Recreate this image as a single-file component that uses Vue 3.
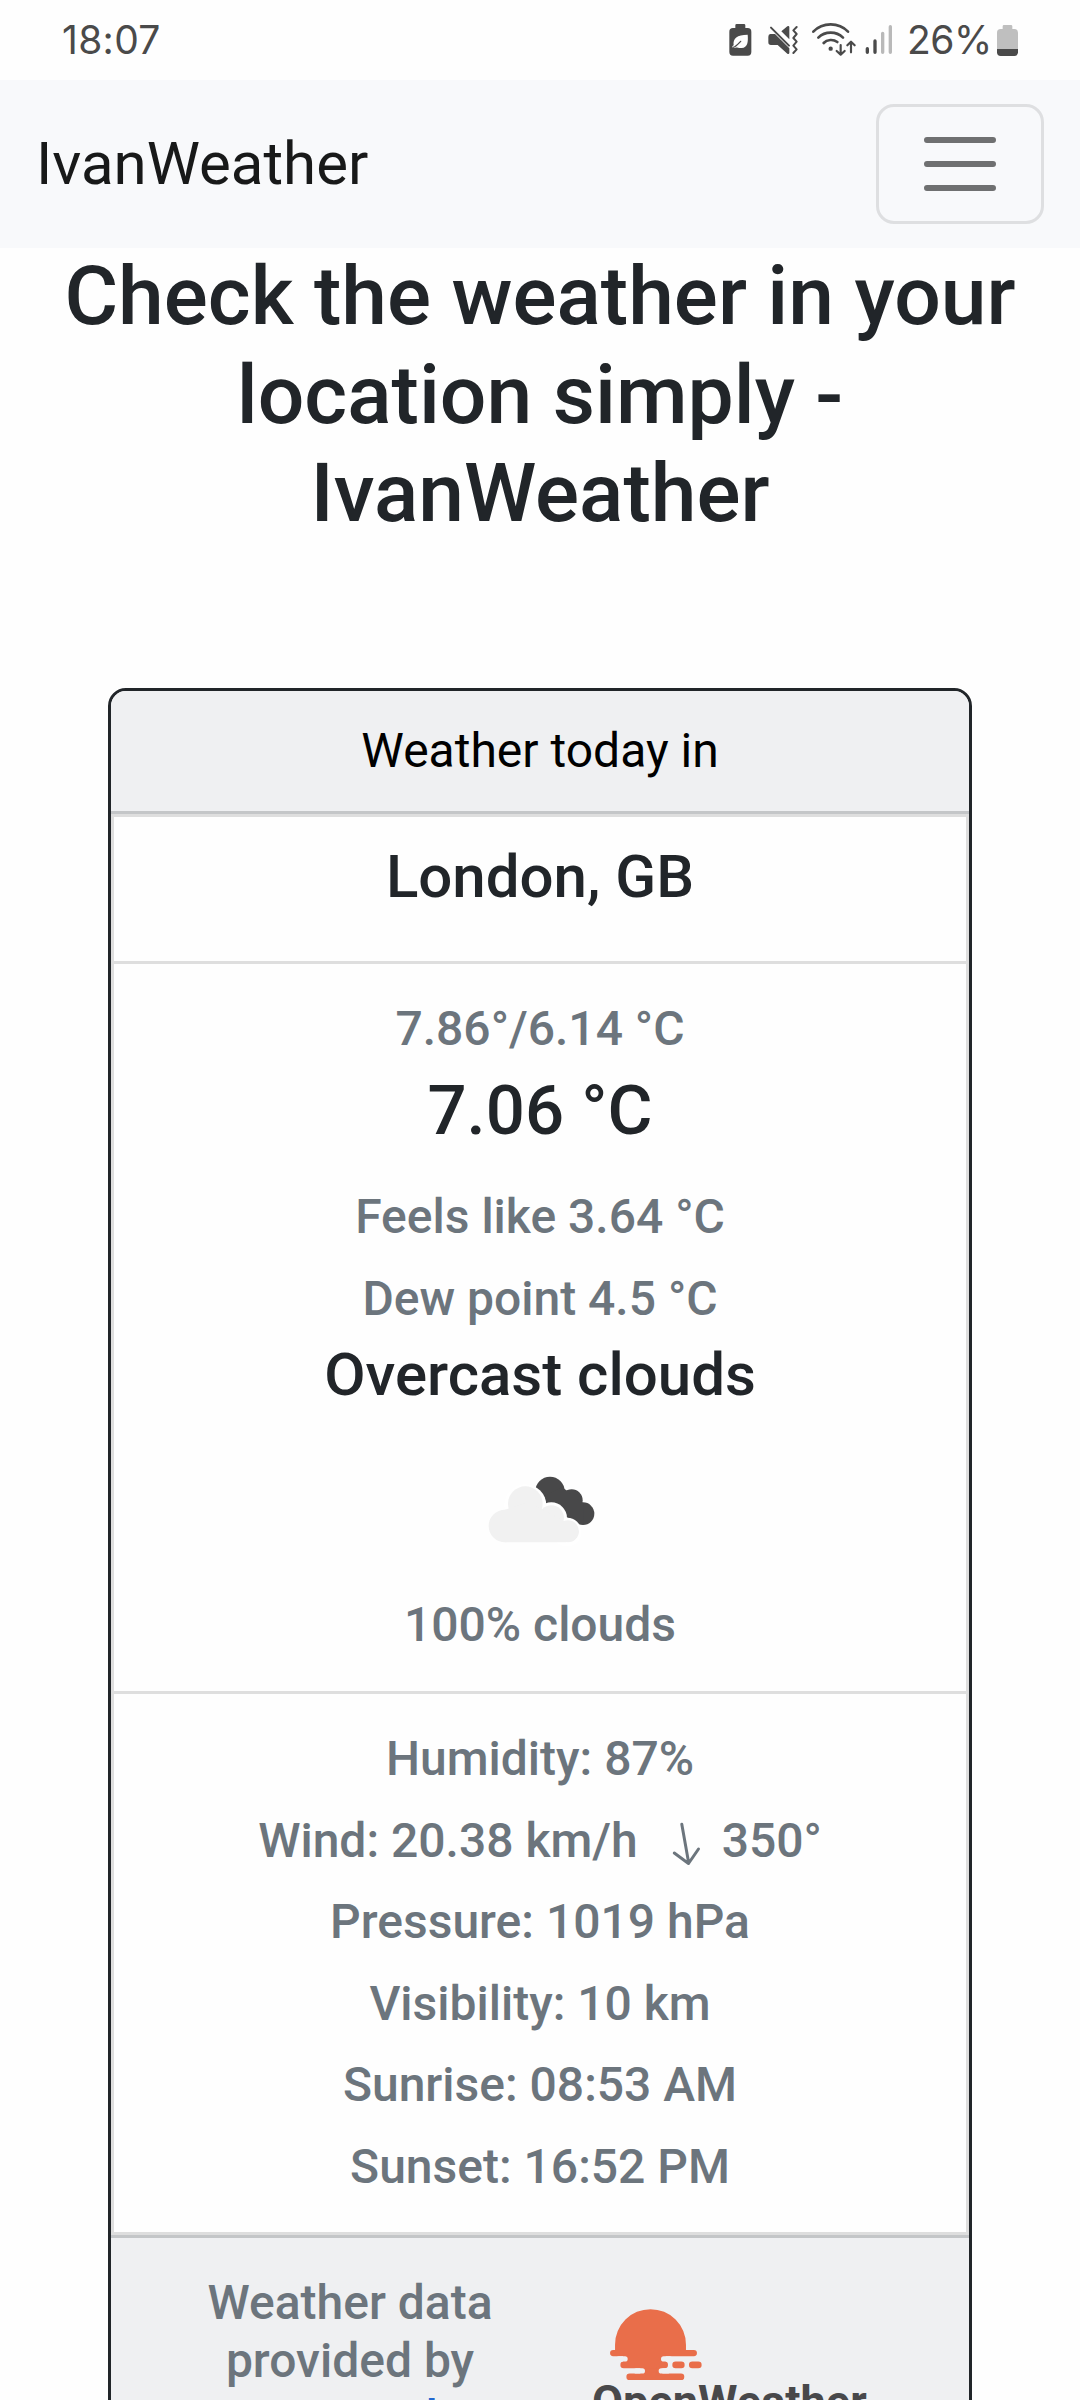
<script setup>
const readings = ['Pressure: 1019 hPa', 'Visibility: 10 km', 'Sunrise: 08:53 AM', 'Sunset: 16:52 PM']
</script>

<template>
  <div class="screen">
    <header class="status">
      <span class="clock">18:07</span>
      <div class="indicators">
        <svg class="glyphs" viewBox="80 60 510 120" fill="none" stroke-linecap="round" stroke-linejoin="round">
          <path fill="#4a4a4a" d="M109 72h22q4 0 4 4v8h7q11 0 11 11v61q0 11-11 11H98q-11 0-11-11V95q0-11 11-11h7v-8q0-4 4-4z" />
          <path fill="#fff" d="M142 104c2 21 0 39-18 40-9 1-13-2-19-1l-8 1c-3-4 0-6 3-8-3-20 10-32 42-32z" />
          <path stroke="#4a4a4a" stroke-width="4" d="M98 142c5 0 10-4 23-18" />
          <path fill="#4a4a4a" d="M210 102h14l43 43v14q-1 5-6 2l-29-26h-20q-8 0-8-8v-17q0-8 6-8zM243 94l18-15q5-3 6 2v37z" />
          <path stroke="#4a4a4a" stroke-width="6" d="M212 83l54 54M289 81l-10 10 10 11-10 12 10 11-10 12 10 11-10 11" />
          <g stroke="#4a4a4a" stroke-width="8">
            <path d="M339 95c28-29 76-29 104 0M354 113c20-20 54-20 74 0M370 129c10-11 29-12 41-3" />
            <path stroke-width="6.500" d="M421 135v28M409 153l12 11 12-11M452 157v-31M441 136l11-11 11 11" />
          </g>
          <circle cx="391" cy="146" r="6.5" fill="#4a4a4a" />
          <path stroke="#4a4a4a" stroke-width="10" d="M501 146v11M524 123v34" />
          <path stroke="#b9b9b9" stroke-width="10" d="M547 100v57M570 80v77" />
        </svg>
        <span class="percent">26%</span>
        <svg class="battery" viewBox="0 0 63 93">
          <path fill="#bfbfbf" d="M21 0h21q4 0 4 4v8h6q11 0 11 11v50H0V23q0-11 11-11h6V4q0-4 4-4z" />
          <path fill="#4a4a4a" d="M0 72h63v10q0 11-11 11H11Q0 93 0 82z" />
        </svg>
      </div>
    </header>

    <nav class="navbar">
      <a class="brand">IvanWeather</a>
      <button class="toggler" type="button" aria-label="Menu">
        <svg viewBox="0 0 30 30" width="90" height="90">
          <path stroke="#6f7071" stroke-width="2" stroke-linecap="round" d="M4 7h22M4 15h22M4 23h22" />
        </svg>
      </button>
    </nav>

    <h1>Check the weather in your location simply - IvanWeather</h1>

    <main class="card">
      <div class="card-header">Weather today in</div>
      <ul class="list">
        <li class="item city"><h5>London, GB</h5></li>
        <li class="item now">
          <h6>7.86°/6.14 °C</h6>
          <h3>7.06 °C</h3>
          <h6>Feels like 3.64 °C</h6>
          <h6 class="dew">Dew point 4.5 °C</h6>
          <h5>Overcast clouds</h5>
          <svg class="cloud" viewBox="495 372 450 450">
            <g fill="#484849">
              <circle cx="750" cy="544" r="44" />
              <circle cx="815" cy="571" r="33" />
              <circle cx="849" cy="611" r="34" />
              <path d="M725 560l60-30 65 50v60l-55-20z" />
            </g>
            <g fill="#fff">
              <circle cx="676" cy="586" r="63" />
              <circle cx="754" cy="624" r="47" />
              <circle cx="801" cy="666" r="43" />
            </g>
            <g fill="#f1f1f1">
              <circle cx="615" cy="648" r="49" />
              <circle cx="676" cy="581" r="52" />
              <circle cx="754" cy="624" r="38" />
              <circle cx="804" cy="664" r="33" />
              <path d="M615 599l61-20 38 12 84 46v60H615z" />
            </g>
          </svg>
          <h6>100% clouds</h6>
        </li>
        <li class="item details">
          <h6>Humidity: 87%</h6>
          <h6 class="wind">
            <span>Wind: 20.38 km/h</span>
            <svg class="arrow" viewBox="0 0 30 46">
              <path d="M10.8 4.3L17.7 43M3.3 33l14.2 10.5L27.5 29" />
            </svg>
            <span>350°</span>
          </h6>
          <h6 v-for="r in readings" :key="r">{{ r }}</h6>
        </li>
      </ul>
      <footer class="card-footer">
        <h6 class="credit">Weather data provided by <a>OpenWeather</a></h6>
        <div class="logo">
          <svg class="sun" viewBox="211 299 276 215">
            <g fill="#e96e4a">
              <path d="M226 425V406a106.500 106.500 0 0 1 213 0v19z" />
              <rect x="211" y="422" width="261" height="19" rx="9.500" />
              <path d="M263 436h102v30H263zM315 470h43v30h-43z" />
              <rect x="242" y="457" width="143" height="20" rx="10" />
              <rect x="398" y="457" width="37" height="20" rx="10" />
              <rect x="448" y="457" width="38" height="20" rx="10" />
              <rect x="260" y="493" width="174" height="20" rx="10" />
              <path d="M250 436h16v25h-16zM362 436h16v25h-16zM302 472h16v25h-16zM352 472h16v25h-16z" />
            </g>
            <g fill="#eff0f2">
              <rect x="230" y="441" width="34" height="16" rx="8" />
              <rect x="364" y="441" width="34" height="16" rx="8" />
              <rect x="282" y="477" width="34" height="16" rx="8" />
              <rect x="357" y="477" width="34" height="16" rx="8" />
            </g>
          </svg>
          <span class="wordmark">OpenWeather</span>
        </div>
      </footer>
    </main>
  </div>
</template>

<style>
body {
  margin: 0;
  background: #fff;
}
</style>

<style scoped>
.screen {
  width: 1080px;
  height: 2400px;
  overflow: hidden;
  background: #fefefe;
  color: #212529;
  font-family: Roboto, sans-serif;
  font-size: 48px;
  line-height: 72px;
}
h1, h3, h5, h6, ul {
  margin: 0;
  padding: 0;
  font-weight: 500;
}
.status {
  display: flex;
  justify-content: space-between;
  align-items: center;
  height: 80px;
  box-sizing: border-box;
  padding: 0 62px 0 62px;
  font-family: Inter, sans-serif;
  font-size: 39px;
  line-height: 80px;
  color: #4a4a4a;
}
.clock {
  letter-spacing: 0.3px;
}
.indicators {
  display: flex;
  align-items: center;
}
.glyphs {
  width: 170px;
  height: 40px;
}
.percent {
  width: 88px;
  margin-left: 10px;
  letter-spacing: -0.5px;
  white-space: nowrap;
}
.battery {
  width: 21px;
  height: 31px;
  margin-left: 2px;
}
.navbar {
  display: flex;
  justify-content: space-between;
  align-items: center;
  height: 168px;
  box-sizing: border-box;
  padding: 0 36px;
  background: #f8f9fb;
}
.brand {
  font-size: 60px;
  line-height: 90px;
  color: #181919;
}
.toggler {
  display: flex;
  align-items: center;
  justify-content: center;
  width: 168px;
  height: 120px;
  padding: 0;
  border: 3px solid #dedfe1;
  border-radius: 18px;
  background: none;
}
h1 {
  margin-top: -1px;
  padding: 0 36px;
  font-size: 82.2px;
  line-height: 98.6px;
  text-align: center;
}
.card {
  width: 864px;
  box-sizing: border-box;
  margin: 145px auto 0;
  border: 3px solid #212529;
  border-radius: 18px;
  overflow: hidden;
  text-align: center;
}
.card-header {
  padding: 24px;
  border-bottom: 3px solid #c4c6c8;
  background: #eff0f2;
  color: #000;
}
.list {
  border: 3px solid #dedede;
  list-style: none;
}
.item + .item {
  border-top: 3px solid #dedede;
}
.city {
  padding: 24px 0 48px;
}
.now,
.details {
  padding-top: 36.2px;
  box-sizing: border-box;
}
.now {
  height: 730px;
}
.details {
  height: 541px;
}
h3 {
  margin: 12px 0 36px;
  font-size: 68.9px;
  line-height: 82.6px;
}
h5 {
  font-size: 60px;
  line-height: 72px;
}
h6 {
  font-size: 48px;
  line-height: 57.6px;
  color: #6c757d;
}
.dew {
  margin: 24px 0 11.3px;
}
.cloud {
  display: block;
  width: 150px;
  height: 150px;
  margin: 23px auto 12.7px;
}
.details h6 + h6 {
  margin-top: 24px;
}
.wind {
  display: flex;
  justify-content: center;
}
.arrow {
  width: 30px;
  height: 46px;
  margin: 8px 21px 0 33px;
  fill: none;
  stroke: #6c757d;
  stroke-width: 3;
  stroke-linecap: round;
  stroke-linejoin: round;
}
.card-footer {
  display: flex;
  height: 260px;
  border-top: 3px solid #c4c6c8;
  background: #eff0f2;
}
.credit {
  width: 330px;
  margin: 36.4px 0 0 74px;
}
.credit a {
  color: #2268d0;
}
.logo {
  display: flex;
  flex-direction: column;
  align-items: flex-start;
  margin: 71px 0 0 77px;
}
.sun {
  width: 92px;
  height: 71.6px;
  margin-left: 18px;
}
.wordmark {
  font-size: 45.1px;
  font-weight: 700;
  line-height: 44px;
  color: #48484a;
}
</style>
